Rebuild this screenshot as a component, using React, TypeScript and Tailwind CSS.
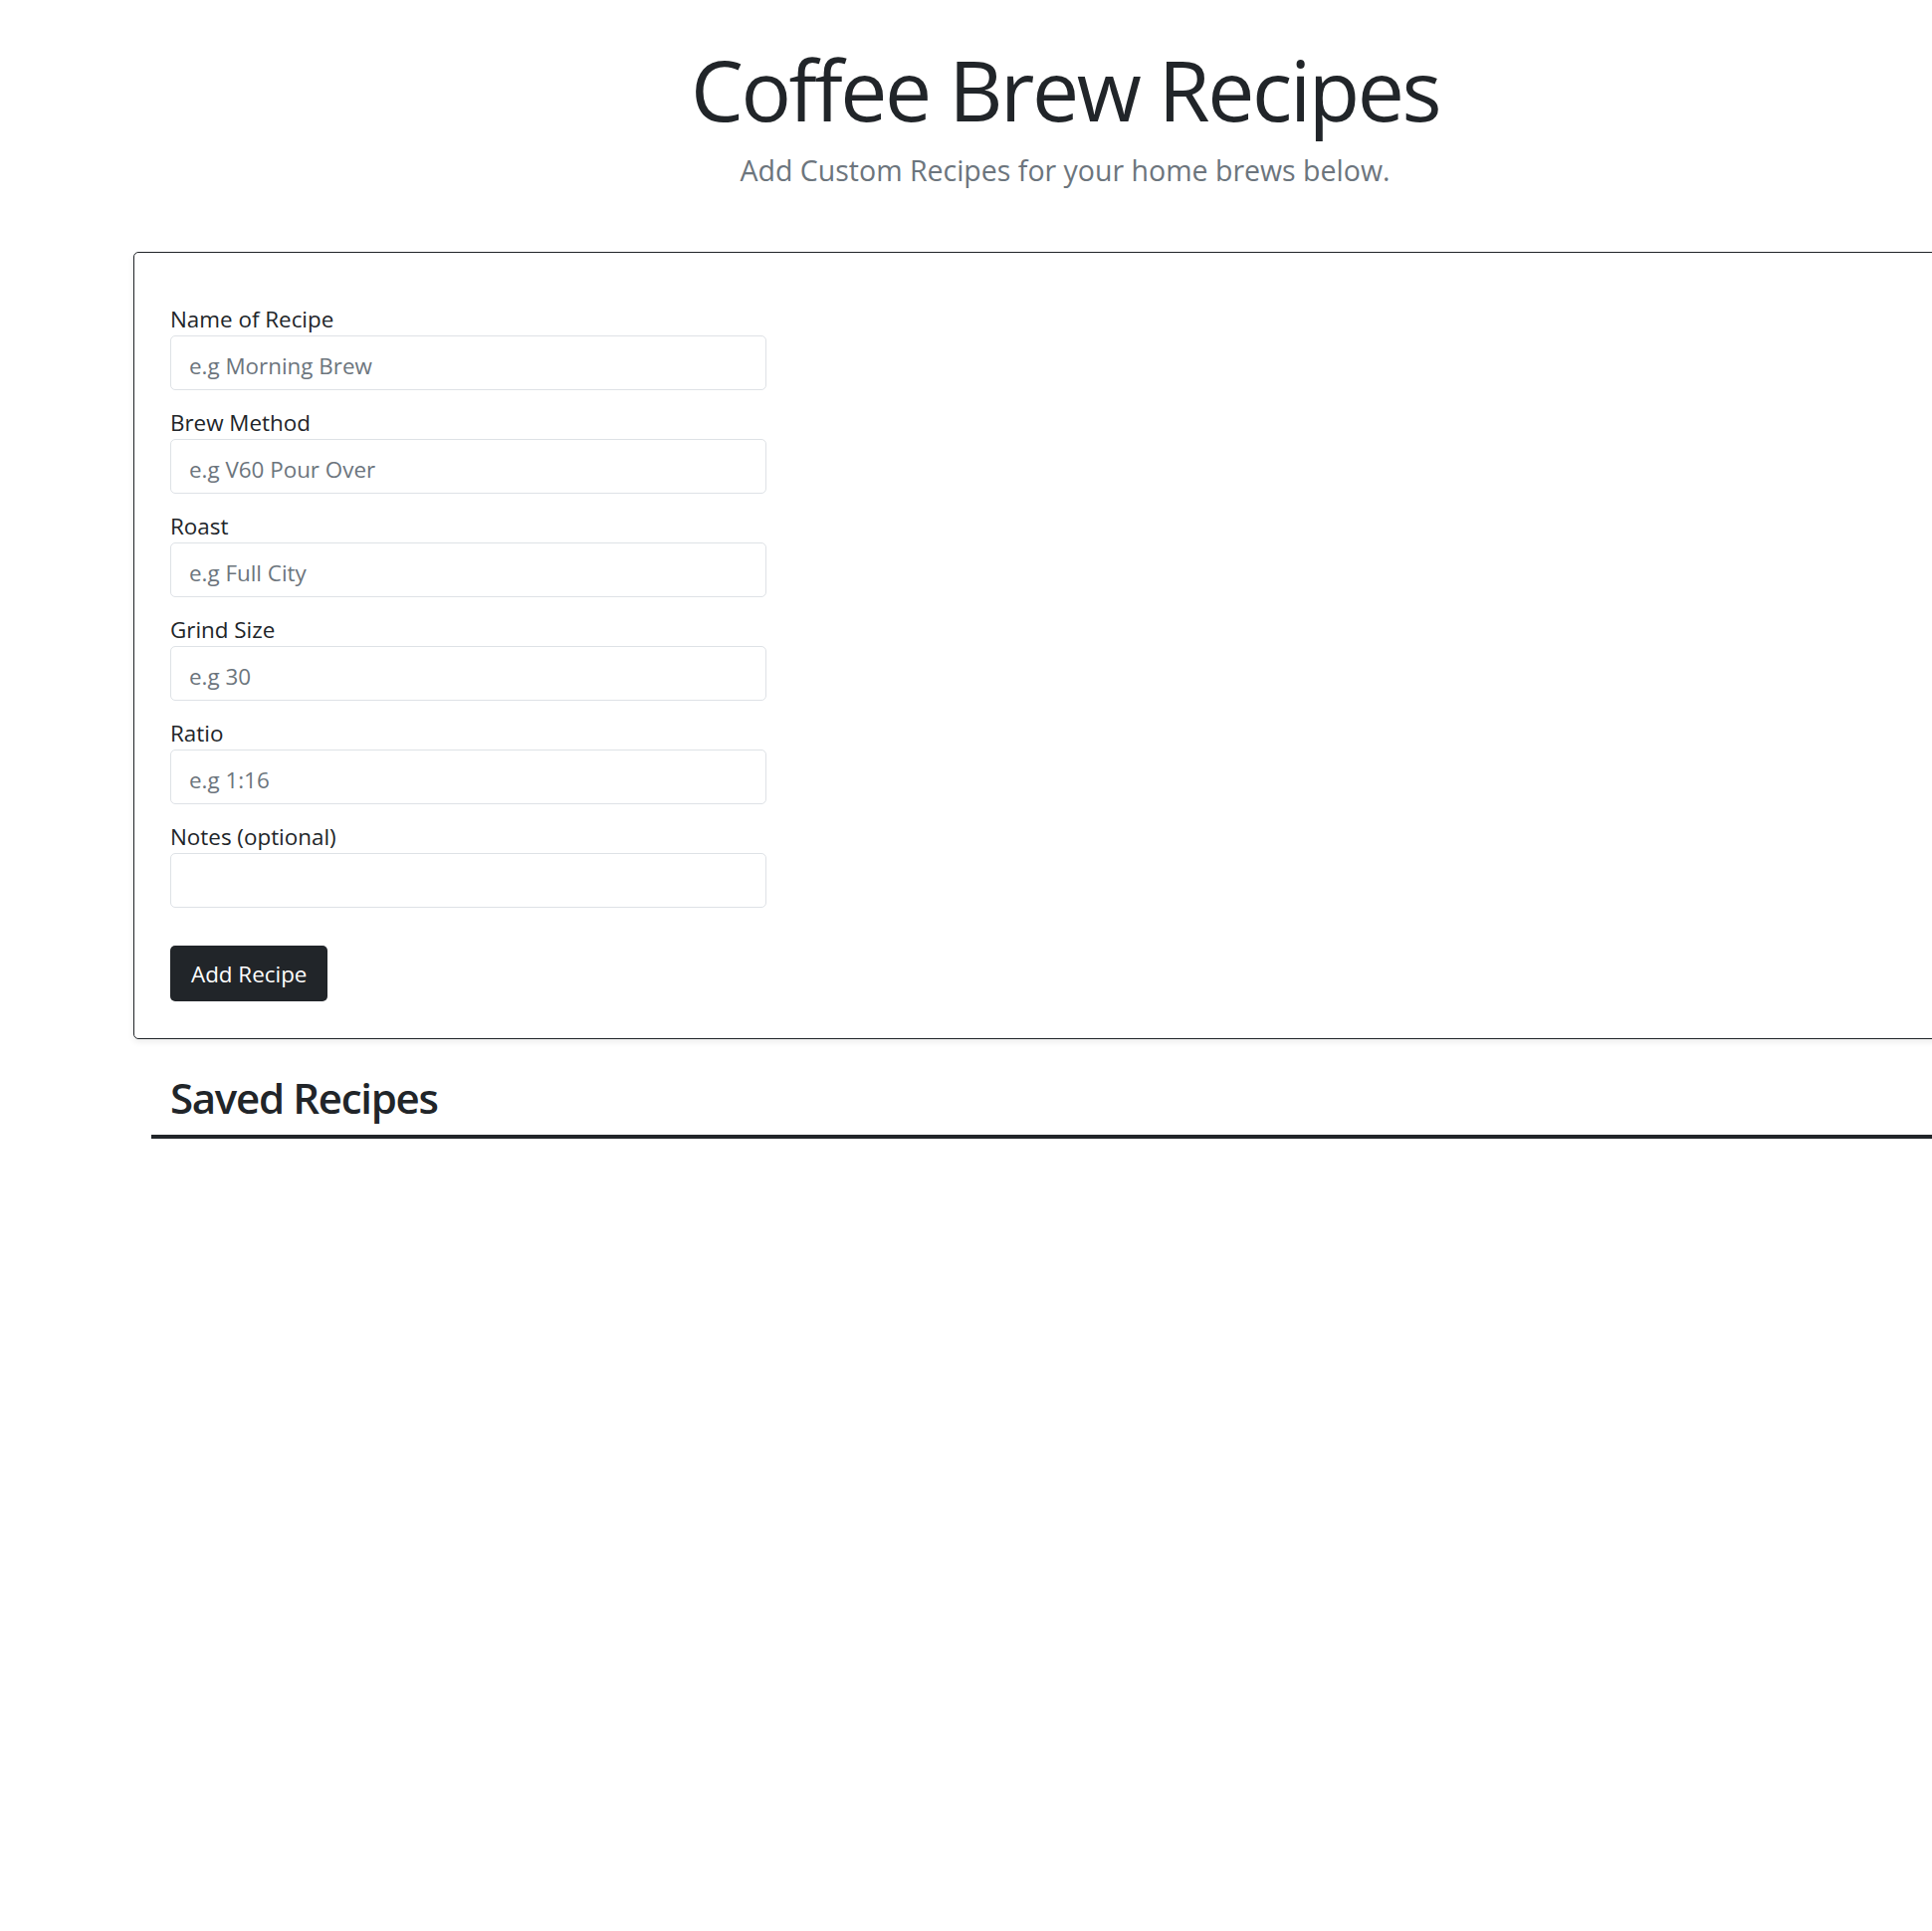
import { useState } from 'react';

interface Field {
  id: string;
  label: string;
  placeholder: string;
}

const fields: Field[] = [
  { id: 'name', label: 'Name of Recipe', placeholder: 'e.g Morning Brew' },
  { id: 'method', label: 'Brew Method', placeholder: 'e.g V60 Pour Over' },
  { id: 'roast', label: 'Roast', placeholder: 'e.g Full City' },
  { id: 'grind', label: 'Grind Size', placeholder: 'e.g 30' },
  { id: 'ratio', label: 'Ratio', placeholder: 'e.g 1:16' },
  { id: 'notes', label: 'Notes (optional)', placeholder: '' },
];

export default function App() {
  const [values, setValues] = useState<Record<string, string>>({});

  return (
    <div className="w-full min-h-screen overflow-hidden bg-white font-['Open_Sans',sans-serif] text-[#212529]">
      <div className="w-[1872px] ml-[134px]">
        {/* Header */}
        <div className="text-center pt-[40px]">
          <h1 className="text-[84px] leading-[1.2] font-normal tracking-[-2.4px] mb-[9px]">Coffee Brew Recipes</h1>
          <p className="text-[28.5px] leading-[1.5] font-normal text-[#6c757d]">
            Add Custom Recipes for your home brews below.
          </p>
        </div>

        {/* Form card */}
        <div className="mt-[60px] border border-[#212529] rounded-[5px] shadow-[0_3px_6px_rgba(0,0,0,0.075)] pt-[50px] pb-[37px] px-[36px]">
          <form onSubmit={e => e.preventDefault()}>
            {fields.map(field => (
              <div key={field.id} className="mb-[15.4px]">
                <label htmlFor={field.id} className="block text-[22.4px] leading-[1.5]">
                  {field.label}
                </label>
                <input
                  id={field.id}
                  type="text"
                  placeholder={field.placeholder}
                  value={values[field.id] || ''}
                  onChange={e => setValues({ ...values, [field.id]: e.target.value })}
                  className="block w-[599px] h-[55px] border border-[#dee2e6] rounded-[5px] pl-[18px] pt-[5px] text-[22.4px] placeholder:text-[#6c757d] outline-none"
                />
              </div>
            ))}
            <button
              type="submit"
              className="mt-[22px] h-[56px] px-[21px] pt-[2px] rounded-[5px] bg-[#212529] text-white text-[22.4px]"
            >
              Add Recipe
            </button>
          </form>
        </div>

        {/* Saved recipes */}
        <div className="ml-[18px] mt-[34px] border-b-4 border-[#212529] pl-[19px] pb-[12px]">
          <h2 className="text-[42px] leading-[1.2] font-semibold tracking-[-1.3px]">Saved Recipes</h2>
        </div>
      </div>
    </div>
  );
}
